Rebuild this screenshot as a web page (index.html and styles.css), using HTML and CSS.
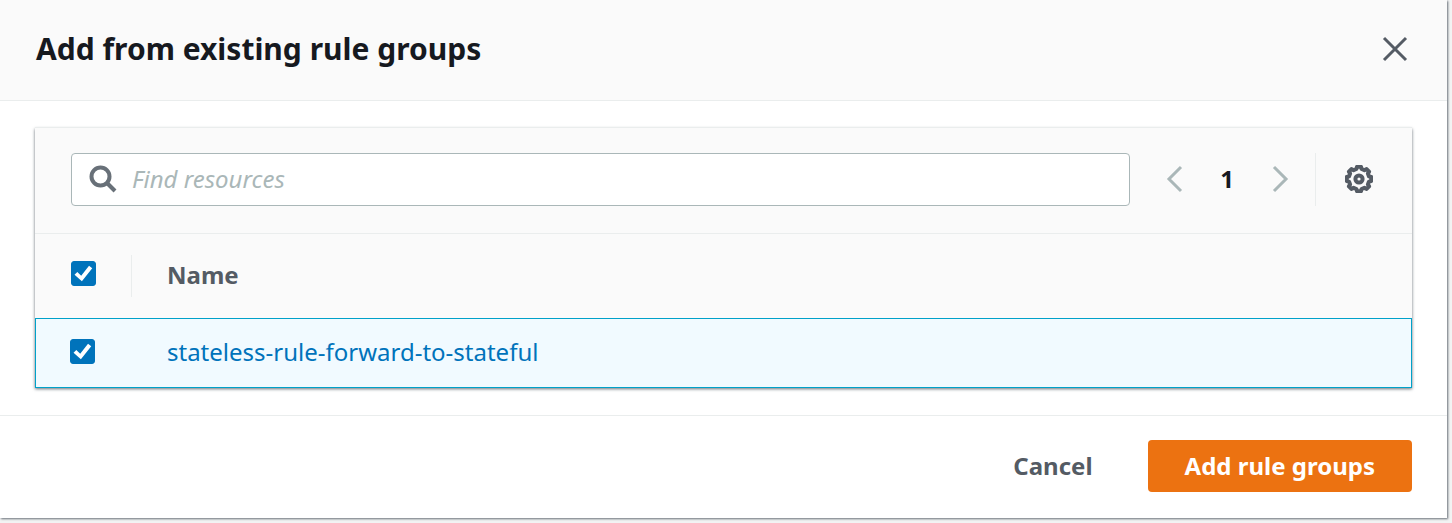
FILE: index.html
```html
<!DOCTYPE html>
<html lang="en">

<head>
    <meta charset="UTF-8">
    <meta name="viewport" content="width=device-width, initial-scale=1.0">
    <title>Add from existing rule groups</title>
    <link rel="stylesheet" href="styles.css">
</head>

<body>
    <div class="modal" role="dialog" aria-labelledby="modal-title">
        <header class="modal-header">
            <h1 id="modal-title">Add from existing rule groups</h1>
            <button type="button" class="icon-button" aria-label="Close">
                <svg width="28" height="28" viewBox="0 0 28 28">
                    <path d="M3 3l22 22M25 3L3 25" />
                </svg>
            </button>
        </header>

        <main class="modal-body">
            <div class="container">
                <!-- Search and pagination -->
                <div class="toolbar">
                    <div class="search">
                        <svg width="28" height="28" viewBox="0 0 28 28" aria-hidden="true">
                            <circle cx="11.5" cy="11.5" r="9" />
                            <path d="M18 18l8 8" />
                        </svg>
                        <input type="text" placeholder="Find resources" aria-label="Find resources">
                    </div>
                    <nav class="pagination" aria-label="Pagination">
                        <button type="button" class="icon-button" aria-label="Previous page" disabled>
                            <svg width="28" height="28" viewBox="0 0 28 28">
                                <path d="M21 2L9 14l12 12" />
                            </svg>
                        </button>
                        <button type="button" class="page">1</button>
                        <button type="button" class="icon-button" aria-label="Next page" disabled>
                            <svg width="28" height="28" viewBox="0 0 28 28">
                                <path d="M8 2l12 12L8 26" />
                            </svg>
                        </button>
                    </nav>
                    <div class="settings">
                        <button type="button" class="icon-button" aria-label="Preferences">
                            <svg width="28" height="28" viewBox="0 0 28 28">
                                <path class="cog" d="M11.4 4L12 1.8h4l.6 2.2 2.8 1.2 2.2-1.1 2.5 2.5-1.2 2 1.1 2.8 2.2.6v4l-2.2.6-1.1 2.8 1.2 2-2.5 2.5-2.2-1.1-2.8 1.2-.6 2.2h-4l-.6-2.2-2.8-1.2-2.2 1.1-2.5-2.5 1.2-2L4 16.6 1.8 16v-4l2.2-.6 1.1-2.8-1.2-2 2.5-2.5 2.2 1.1z" />
                                <circle class="hub" cx="14" cy="14" r="3.6" />
                            </svg>
                        </button>
                    </div>
                </div>

                <table>
                    <thead>
                        <tr>
                            <th class="select"><input type="checkbox" aria-label="Select all rule groups" checked></th>
                            <th scope="col">Name</th>
                        </tr>
                    </thead>
                    <tbody>
                        <tr>
                            <td class="select"><input type="checkbox" aria-label="Select stateless-rule-forward-to-stateful" checked></td>
                            <td><a href="#">stateless-rule-forward-to-stateful</a></td>
                        </tr>
                    </tbody>
                </table>
            </div>
        </main>

        <footer class="modal-footer">
            <button type="button" class="button">Cancel</button>
            <button type="button" class="button primary">Add rule groups</button>
        </footer>
    </div>
</body>

</html>
```
FILE: styles.css
```css
* {
    box-sizing: border-box;
}

body {
    margin: 0;
    padding: 0 5px 5px 0;
    background-color: #f2f3f3;
    color: #16191f;
    font-family: "Noto Sans", "Open Sans", sans-serif;
    font-size: 24px;
    line-height: 36px;
}

button,
input {
    font: inherit;
}

button {
    border: none;
    background: none;
    cursor: pointer;
}

svg {
    display: block;
    fill: none;
    stroke: #545b64;
    stroke-width: 3;
}

.modal {
    background-color: #fff;
    box-shadow: 1px 1px 2px #687078;
}

.modal-header {
    display: flex;
    align-items: center;
    justify-content: space-between;
    padding: 25px 36px 27px;
    background-color: #fafafa;
    border-bottom: 1px solid #eaeded;
}

h1 {
    margin: 0;
    font-size: 30px;
    line-height: 48px;
}

.icon-button {
    padding: 2px;
}

.icon-button:disabled svg {
    stroke: #aab7b8;
}

.cog {
    stroke-width: 4;
    stroke-linejoin: round;
}

.hub {
    stroke-width: 4;
}

.modal-body {
    padding: 27px 35px;
}

.container {
    background-color: #fafafa;
    box-shadow: 0 -1px 0 #eaeded, 0 1px 3px #687078;
}

/* Toolbar */
.toolbar {
    display: flex;
    align-items: center;
    padding: 25px 36px 27px;
    border-bottom: 1px solid #eaeded;
}

.search {
    display: flex;
    align-items: center;
    flex: 1;
    gap: 15px;
    height: 53px;
    padding: 0 17px 2px;
    background-color: #fff;
    border: 1px solid #aab7b8;
    border-radius: 4px;
}

.search svg {
    stroke: #687078;
    stroke-width: 4;
}

.search input {
    flex: 1;
    min-width: 0;
    padding: 0;
    border: none;
    outline: none;
    background: none;
}

.search input::placeholder {
    color: #aab7b8;
    font-style: italic;
    opacity: 1;
}

.pagination {
    display: flex;
    align-items: center;
    gap: 22px;
    padding: 0 19px 2px 28px;
}

.page {
    width: 30px;
    padding: 0;
    color: #16191f;
    font-weight: bold;
}

.settings {
    display: flex;
    align-items: center;
    height: 53px;
    padding: 0 1px 1px 27px;
    border-left: 1px solid #eaeded;
}

/* Table */
table {
    width: 100%;
    border-collapse: separate;
    border-spacing: 0;
}

th,
td {
    padding: 0 35px 2px;
    text-align: left;
}

th {
    height: 84px;
    color: #545b64;
}

td {
    height: 70px;
    padding-bottom: 3px;
    background-color: #f1faff;
    border: 1px solid #00a1c9;
    border-width: 1px 0;
}

td:first-child {
    border-left-width: 1px;
}

td:last-child {
    border-right-width: 1px;
}

.select {
    width: 97px;
    padding-right: 0;
}

th.select {
    padding-left: 36px;
    padding-bottom: 5px;
    background: linear-gradient(#eaeded, #eaeded) right center / 1px 42px no-repeat;
}

td.select {
    padding-left: 34px;
}

a {
    color: #0073bb;
    text-decoration: none;
}

input[type="checkbox"] {
    appearance: none;
    display: block;
    width: 25px;
    height: 25px;
    margin: 0;
    border: 1px solid #aab7b8;
    border-radius: 3px;
    background-color: #fff;
}

input[type="checkbox"]:checked {
    background-color: #0073bb;
    border-color: #0073bb;
}

input[type="checkbox"]:checked::before {
    content: "";
    display: block;
    height: 100%;
    background-color: #fff;
    clip-path: polygon(11% 55%, 23% 43%, 40% 60%, 74% 16%, 88% 27%, 43% 84%);
}

/* Footer */
.modal-footer {
    display: flex;
    justify-content: flex-end;
    gap: 18px;
    padding: 24px 35px 26px;
    border-top: 1px solid #eaeded;
}

.button {
    height: 52px;
    padding: 0 37px;
    border-radius: 4px;
    color: #545b64;
    font-weight: bold;
}

.primary {
    background-color: #ec7211;
    color: #fff;
}
```
